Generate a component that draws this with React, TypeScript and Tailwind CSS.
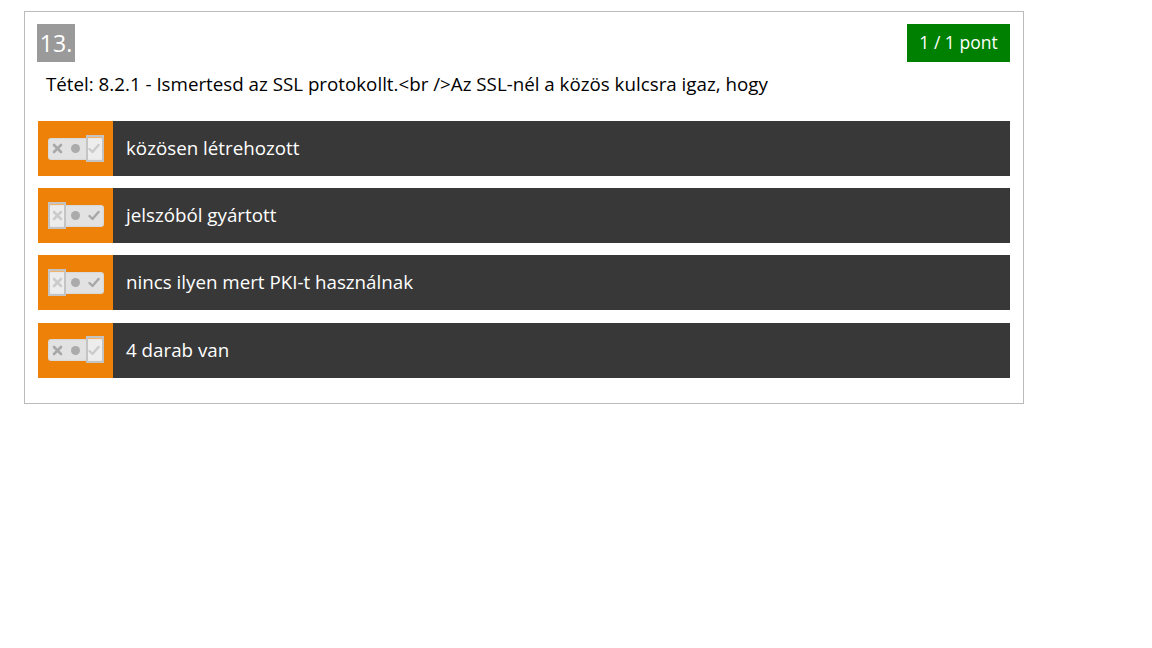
import React from 'react';

type Answer = { text: string; state: 'yes' | 'no' };

const answers: Answer[] = [
  { text: 'közösen létrehozott', state: 'yes' },
  { text: 'jelszóból gyártott', state: 'no' },
  { text: 'nincs ilyen mert PKI-t használnak', state: 'no' },
  { text: '4 darab van', state: 'yes' },
];

function Toggle({ state }: { state: 'yes' | 'no' }) {
  return (
    <div className="relative w-[56px] h-[22px] rounded-[3px] bg-[#e2e2e2] shadow-[inset_0_0_2px_rgba(0,0,0,0.15)]">
      <div className="flex h-full items-center justify-between px-[4px]">
        <svg width="11" height="11" viewBox="0 0 11 11">
          <path d="M2 2 L9 9 M9 2 L2 9" stroke="#a8a8a8" strokeWidth="2.6" strokeLinecap="round" />
        </svg>
        <div className="w-[9px] h-[9px] rounded-full bg-[#ababab]" />
        <svg width="12" height="11" viewBox="0 0 12 11">
          <path d="M1.5 6 L4.5 9 L10.5 2" stroke="#a8a8a8" strokeWidth="2.4" fill="none" strokeLinecap="round" strokeLinejoin="round" />
        </svg>
      </div>
      <div
        className={
          'absolute top-[-3px] w-[18px] h-[27px] border-2 border-[#c4c4c4] bg-white/40 ' +
          (state === 'yes' ? 'right-0' : 'left-0')
        }
      />
    </div>
  );
}

export default function App() {
  return (
    <div className="bg-white min-h-[648px] pt-[11px] pl-[24px]" style={{ fontFamily: '"Open Sans", "Liberation Sans", sans-serif' }}>
      <div className="w-[1000px] border border-[#bbbbbb] pl-[12px] pr-[13px] pt-[12px] pb-[25px]">
        <div className="flex items-start justify-between h-[38px]">
          <div className="w-[38px] h-[38px] bg-[#9a9a9a] text-white text-[23px] flex items-center justify-center leading-none">
            13.
          </div>
          <div className="w-[103px] h-[38px] bg-[#008000] text-white text-[17.5px] flex items-center justify-center leading-none">
            1 / 1 pont
          </div>
        </div>
        <div className="pl-[9px] pt-[9px] text-[18.75px] leading-[26px] text-black">
          Tétel: 8.2.1 - Ismertesd az SSL protokollt.&lt;br /&gt;Az SSL-nél a közös kulcsra igaz, hogy
        </div>
        <div className="mt-[24px] ml-px flex flex-col gap-[12.2px]">
          {answers.map((a, i) => (
            <div key={i} className="flex h-[55px] bg-[#383838]">
              <div className="w-[75px] bg-[#ee8108] flex items-center pl-[10px]">
                <Toggle state={a.state} />
              </div>
              <div className="flex items-center pl-[13px] pb-px text-white text-[18.75px]">{a.text}</div>
            </div>
          ))}
        </div>
      </div>
    </div>
  );
}
